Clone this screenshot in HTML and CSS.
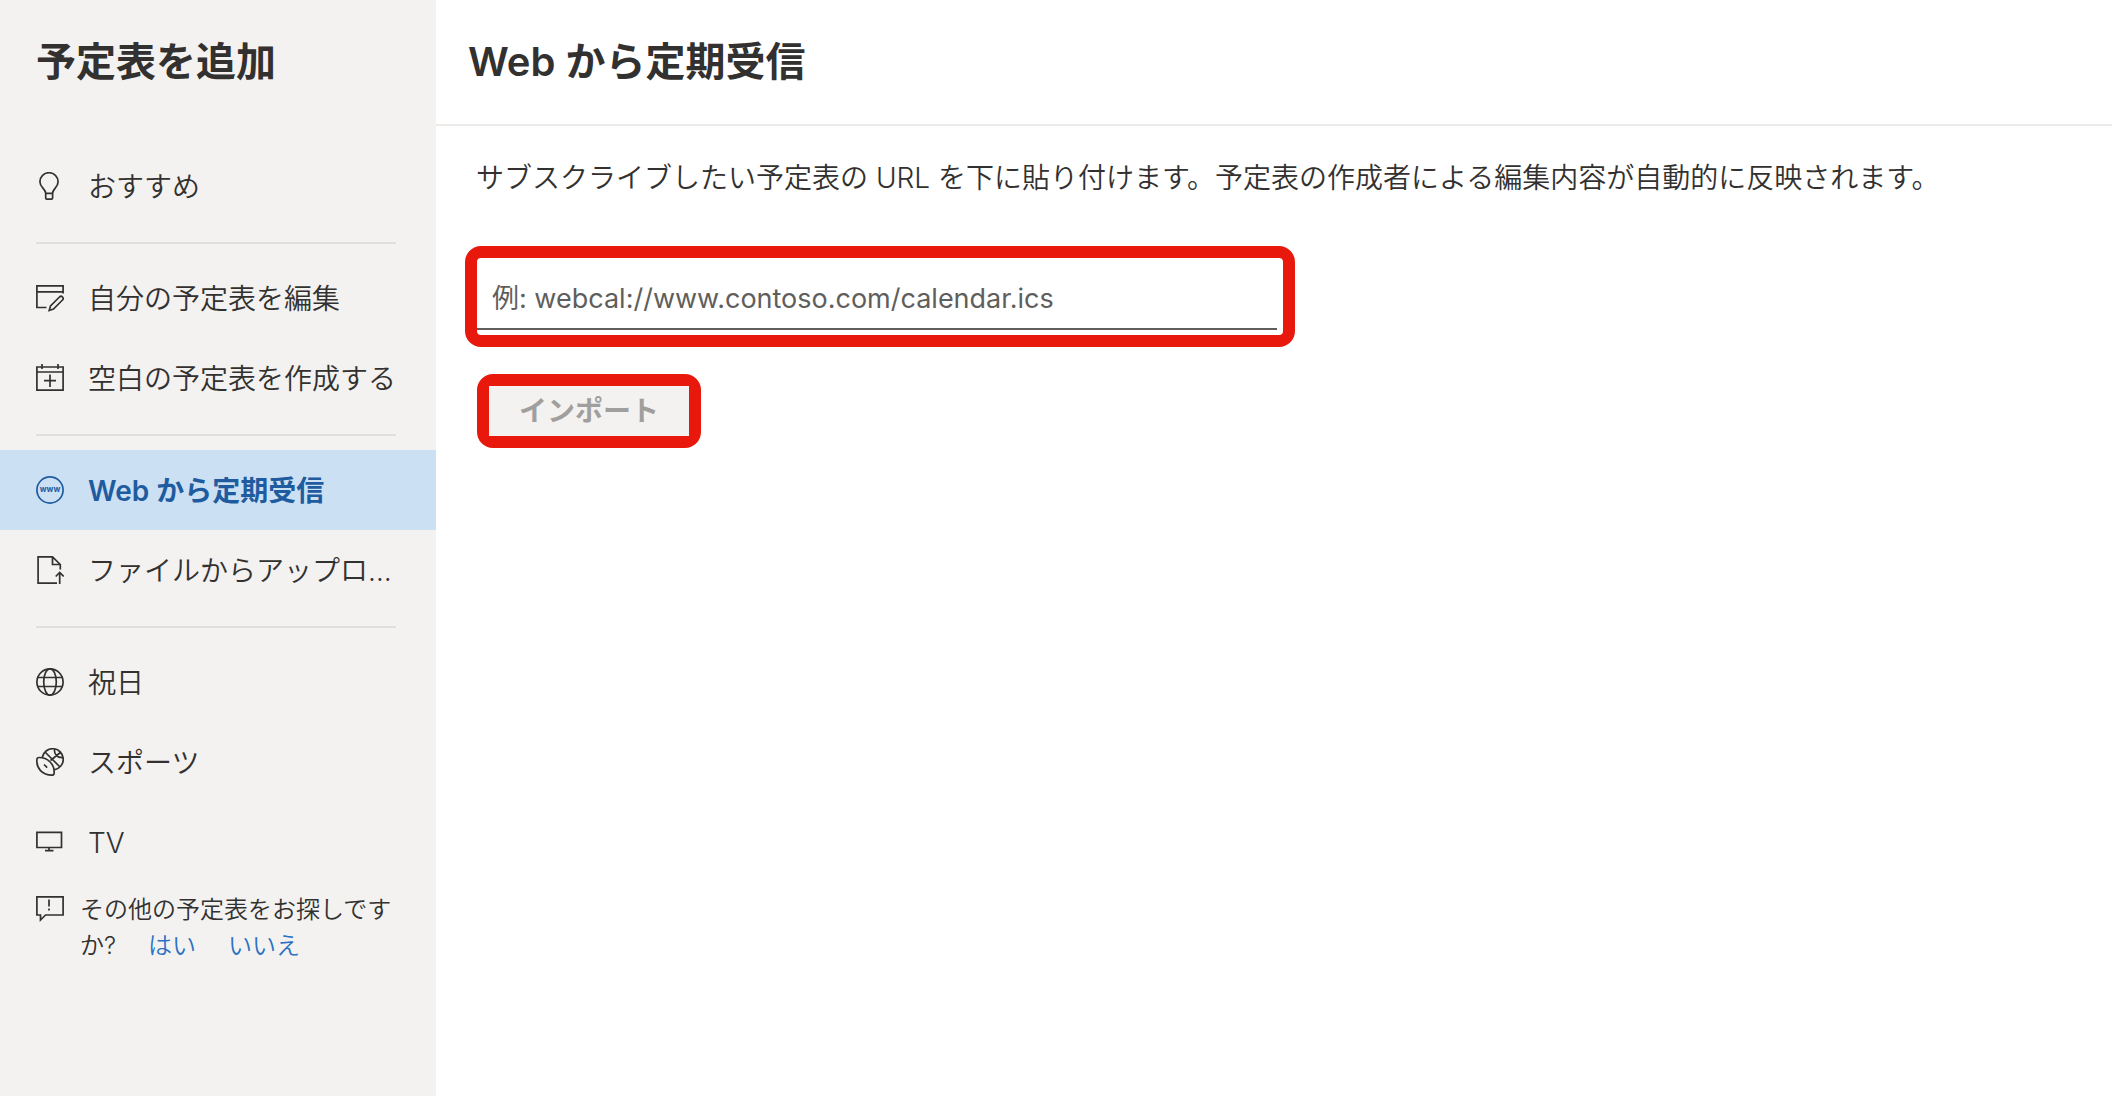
FILE: index.html
```html
<!DOCTYPE html>
<html lang="ja">
<head>
<meta charset="utf-8">
<meta name="viewport" content="width=device-width, initial-scale=1">
<title>予定表を追加</title>
<link rel="stylesheet" href="styles.css">
</head>
<body>
<div class="app">
  <aside class="sidebar">
    <h1 class="title sidebar-title">予定表を追加</h1>
    <nav>
      <ul class="nav-group">
        <li><button type="button" class="nav-item">
          <svg class="icon" viewBox="0 0 28 28"><path d="M9.700 21.300C9.700 17 3.900 15.500 3.900 9.800A9.100 9.100 0 0 1 22.100 9.800C22.100 15.500 16.600 17 16.600 21.300ZM9.700 21.300V26a1.200 1.200 0 0 0 1.200 1.200h4.500a1.200 1.200 0 0 0 1.200-1.200V21.300"/></svg>
          <span class="nav-label">おすすめ</span></button></li>
      </ul>
      <ul class="nav-group">
        <li><button type="button" class="nav-item">
          <svg class="icon" viewBox="0 0 28 28"><path d="M10.500 23.500H.9V1.900H27.100V9.500M.9 7.900H27.100M13.200 26.500l1.300-4.600 9-8.900a2 2 0 0 1 3 3l-9 9Z"/></svg>
          <span class="nav-label">自分の予定表を編集</span></button></li>
        <li><button type="button" class="nav-item">
          <svg class="icon" viewBox="0 0 28 28"><path d="M.9 3H27.100V26.100H.9ZM.9 8H27.100M6 0V5M22 0V5M14 10.500V23M8 16.700H20"/></svg>
          <span class="nav-label">空白の予定表を作成する</span></button></li>
      </ul>
      <ul class="nav-group">
        <li><button type="button" class="nav-item nav-item-active" aria-current="page">
          <svg class="icon" viewBox="0 0 28 28"><circle cx="14" cy="14" r="13.100"/><text class="icon-text" x="14" y="16" text-anchor="middle">www</text></svg>
          <span class="nav-label">Web から定期受信</span></button></li>
        <li><button type="button" class="nav-item">
          <svg class="icon" viewBox="0 0 28 28"><path d="M21 27.100H2.100V.9H16.500L24.300 8.500V13.500M16.500 .9V8.500H24.300M23.700 28V16.500M19.700 20.500l4-4 4 4"/></svg>
          <span class="nav-label">ファイルからアップロード</span></button></li>
      </ul>
      <ul class="nav-group">
        <li><button type="button" class="nav-item">
          <svg class="icon" viewBox="0 0 28 28"><circle cx="14" cy="14" r="13.100"/><ellipse cx="14" cy="14" rx="6.300" ry="13.100"/><path d="M1.500 9.500H26.500M1.500 18.500H26.500"/></svg>
          <span class="nav-label">祝日</span></button></li>
        <li><button type="button" class="nav-item">
          <svg class="icon" viewBox="0 0 28 28"><path d="M6.200 9.500A10.600 10.600 0 1 1 18.200 21.800M9.500 4.500L24 19M14.500 12.500L25 4M18.500 1C18 6 21 10 27 9.500M.9 11.500C.2 20 6 27.300 16.500 27.100C18 27 18.300 26 18.200 24C18 16 12 9.500 3 9.500C1.500 9.500 1 10 .9 11.500ZM8 16.500l3.200 3.200"/></svg>
          <span class="nav-label">スポーツ</span></button></li>
        <li><button type="button" class="nav-item">
          <svg class="icon" viewBox="0 0 28 28"><path d="M.9 4.300H25.500V19.500H.9ZM13 19.500V22.500M9 22.700H17.500"/></svg>
          <span class="nav-label">TV</span></button></li>
      </ul>
    </nav>
    <div class="feedback">
      <svg class="icon" viewBox="0 0 28 28"><path d="M.9 .9H27.100V19H9.500L4.500 24V19H.9ZM13 3.500V10.500M13 12.500V14.500"/></svg>
      <p class="feedback-text">その他の予定表をお探しですか?<a class="feedback-link" href="#yes">はい</a><a class="feedback-link" href="#no">いいえ</a></p>
    </div>
  </aside>
  <main class="content">
    <header class="content-header"><h2 class="title">Web から定期受信</h2></header>
    <form class="subscribe">
      <label class="description" for="url">サブスクライブしたい予定表の URL を下に貼り付けます。予定表の作成者による編集内容が自動的に反映されます。</label>
      <div class="highlight highlight-field"><input class="url-input" id="url" type="text" placeholder="例: webcal://www.contoso.com/calendar.ics"></div>
      <div class="highlight highlight-button"><button class="import-button" type="submit" disabled>インポート</button></div>
    </form>
  </main>
</div>
</body>
</html>
```
FILE: styles.css
```css
* { box-sizing: border-box; }

body {
  margin: 0;
  color: #323130;
  background: #fff;
  font-family: Inter, "Noto Sans CJK JP", sans-serif;
  font-size: 28px;
  font-weight: 350;
  line-height: 40px;
}

button, input { font: inherit; color: inherit; }

.app {
  display: grid;
  grid-template-columns: 436px minmax(0, 1fr);
  min-height: 100vh;
}

.title {
  margin: 0;
  font-size: 40px;
  font-weight: 600;
  line-height: 60px;
}

/* Sidebar */
.sidebar { background: #f3f2f1; }

.sidebar-title { padding: 32px 36px 54px; }

.nav-group {
  margin: 0;
  padding: 0;
  list-style: none;
}

.nav-group + .nav-group::before {
  content: "";
  display: block;
  height: 2px;
  margin: 16px 40px 14px 36px;
  background: #e1dfdd;
}

.nav-item {
  display: flex;
  align-items: center;
  gap: 24px;
  width: 100%;
  height: 80px;
  padding: 0 40px 0 36px;
  border: 0;
  background: none;
  text-align: left;
}

.nav-label {
  padding-top: 2px;
  overflow: hidden;
  text-overflow: ellipsis;
  white-space: nowrap;
}

.nav-item-active {
  background: #cce0f4;
  color: #1f5c9f;
  font-weight: 600;
}

.icon {
  flex: none;
  width: 28px;
  height: 28px;
  fill: none;
  stroke: currentColor;
  stroke-width: 1.7;
}

.icon-text {
  fill: currentColor;
  stroke: none;
  font-size: 8px;
  font-weight: 700;
}

.feedback {
  display: flex;
  gap: 16px;
  padding: 10px 40px 32px 36px;
  font-size: 24px;
  line-height: 36px;
}

.feedback .icon { height: 36px; }

.feedback-text { margin: 0; }

.feedback-link {
  margin-left: 32px;
  color: #2b71c4;
  text-decoration: none;
}

/* Content */
.content-header {
  padding: 32px;
  border-bottom: 2px solid #edebe9;
}

.subscribe {
  display: flex;
  flex-direction: column;
  align-items: flex-start;
  padding: 32px 29px;
}

.description { padding: 0 11px; }

.highlight {
  border: 12px solid #e8190c;
  border-radius: 16px;
}

.highlight-field {
  width: 830px;
  max-width: 100%;
  margin-top: 48px;
  padding: 7px 6px 5px 0;
}

.url-input {
  display: block;
  width: 100%;
  height: 65px;
  padding: 4px 15px 0;
  border: 0;
  border-bottom: 2px solid #605e5c;
  background: none;
  font-size: 27px;
  font-weight: 400;
}

.url-input::placeholder { color: #605e5c; opacity: 1; }

.highlight-button { margin: 27px 12px 0; }

.import-button {
  display: block;
  height: 50px;
  padding: 0 30px;
  border: 0;
  background: #f3f2f1;
  color: #a19f9d;
  font-weight: 600;
}
```
